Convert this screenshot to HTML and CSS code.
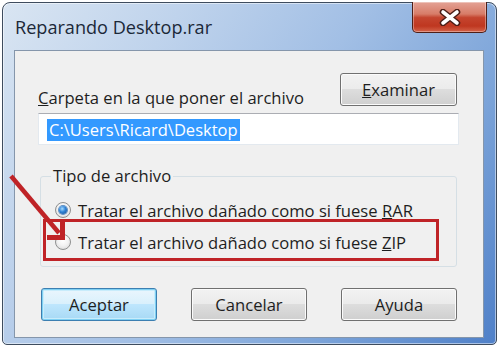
FILE: index.html
```html
<!DOCTYPE html>
<html lang="es">
<head>
  <meta charset="UTF-8" />
  <title>Reparando Desktop.rar</title>
  <link rel="stylesheet" href="styles.css">
</head>
<body>

  <div class="stage">
    <!-- Dialog window -->
    <div class="window">
      <div class="titlebar">
        <span class="title">Reparando Desktop.rar</span>
        <div class="close">
          <svg width="22" height="17" viewBox="0 0 22 17">
            <path d="M4 3 L18 14 M18 3 L4 14" stroke="#4b1d16" stroke-width="6.5" stroke-linecap="round" fill="none"/>
            <path d="M4 3 L18 14 M18 3 L4 14" stroke="#ffffff" stroke-width="3.6" stroke-linecap="round" fill="none"/>
          </svg>
        </div>
      </div>

      <div class="client">
        <div class="folder-row">
          <label class="folder-label"><u>C</u>arpeta en la que poner el archivo</label>
          <button class="btn btn-browse"><u>E</u>xaminar</button>
        </div>
        <div class="path-input"><span class="selected">C:\Users\Ricard\Desktop</span></div>

        <fieldset class="group">
          <legend>Tipo de archivo</legend>
          <div class="option"><span class="radio checked"></span>Tratar el archivo dañado como si fuese <u>R</u>AR</div>
          <div class="option"><span class="radio"></span>Tratar el archivo dañado como si fuese <u>Z</u>IP</div>
        </fieldset>

        <div class="actions">
          <button class="btn btn-default">Aceptar</button>
          <button class="btn">Cancelar</button>
          <button class="btn">Ayuda</button>
        </div>
      </div>
    </div>

    <!-- Red annotation over the dialog -->
    <svg class="annotation" width="500" height="347" viewBox="0 0 500 347">
      <rect x="44.5" y="220.5" width="393" height="39" fill="none" stroke="#bf2327" stroke-width="3"/>
      <path d="M11 176 L59 233" stroke="#bf2327" stroke-width="4.5" fill="none"/>
      <path d="M47 237.5 L62.5 237.5 L62.5 222" stroke="#bf2327" stroke-width="5" fill="none"/>
    </svg>
  </div>

</body>
</html>
```

FILE: styles.css
```css
* { box-sizing: border-box; }
body {
  margin: 0;
  background: #ffffff;
  font-family: 'Open Sans', 'Noto Sans', sans-serif;
  color: #1e1e1e;
}

.stage {
  position: relative;
  width: 500px;
  height: 347px;
  padding: 2px 0 0 2px;
}

/* Aero frame */
.window {
  width: 495px;
  height: 343px;
  border: 1px solid #3e4c5e;
  border-radius: 8px 8px 5px 5px;
  padding: 0 12px 6px 11px;
  background: linear-gradient(125deg, #d9e5f2 0%, #bfd3ec 25%, #a2bfe5 50%, #7ca4d9 75%, #4f80c8 100%);
  box-shadow: inset 0 0 0 1px rgba(255, 255, 255, 0.5);
}

.titlebar {
  display: flex;
  justify-content: space-between;
  align-items: flex-start;
  height: 47px;
}
.title {
  padding: 12px 0 0 1px;
  font-size: 18.1px;
  color: #1b2838;
}
.close {
  width: 75px;
  height: 31px;
  margin: -1px -3px 0 0;
  border: 1px solid #4f1f17;
  border-top: none;
  border-radius: 0 0 5px 5px;
  background: linear-gradient(#e4a295 0%, #d77c68 40%, #c4452f 52%, #bf3720 80%, #d3634a 100%);
  box-shadow: inset 0 0 0 1px rgba(255, 255, 255, 0.35);
  display: flex;
  justify-content: center;
  align-items: center;
}

.client {
  height: 288px;
  background: #f0f0f0;
  border: 1px solid #8596ab;
  padding: 0 26px 0 23px;
  font-size: 16.6px;
}

.folder-row {
  display: flex;
  justify-content: space-between;
  align-items: flex-end;
  padding-top: 22px;
}
.folder-label {
  margin-bottom: -3px;
  line-height: 22px;
}

.btn {
  height: 33px;
  width: 117px;
  border: 1px solid #707070;
  border-radius: 3px;
  background: linear-gradient(#f2f2f2 0%, #ebebeb 49%, #dddddd 50%, #cfcfcf 100%);
  box-shadow: inset 0 0 0 1px #fbfbfb;
  font-family: inherit;
  font-size: 16.6px;
  color: #1e1e1e;
  padding: 0;
}
.btn-default {
  border-color: #3c7fb1;
  background: linear-gradient(#eaf6fd 0%, #d9f0fc 49%, #bee6fd 50%, #a7d9f5 100%);
  box-shadow: inset 0 0 0 1px #7fd0f3, inset 0 0 0 2px #c8ecfb;
}

.path-input {
  height: 32px;
  margin: 7px -2px 0 0;
  padding: 4px 8px;
  background: #ffffff;
  border: 1px solid #e3e9ef;
  border-top-color: #abadb3;
}
.selected {
  display: inline-block;
  height: 22px;
  line-height: 22px;
  padding: 0 2px;
  background: #3399ff;
  color: #ffffff;
  font-size: 16.5px;
}

.group {
  margin: 20px 0 0 2px;
  padding: 7px 0 8px 14px;
  border: 1px solid #d5dfe5;
  border-radius: 3px;
}
.group legend {
  margin-left: -4px;
  padding: 0 2px;
  line-height: 22px;
}
.option {
  display: flex;
  align-items: center;
  height: 32px;
  white-space: pre;
}
.radio {
  width: 16px;
  height: 16px;
  margin-right: 7px;
  border-radius: 50%;
  border: 1px solid #8e8f8f;
  background: radial-gradient(circle at 50% 40%, #ffffff 0%, #f3f3f3 45%, #d4d4d4 100%);
  display: flex;
  justify-content: center;
  align-items: center;
}
.radio.checked::after {
  content: "";
  width: 8px;
  height: 8px;
  border-radius: 50%;
  background: radial-gradient(circle at 40% 35%, #a8dcff 0%, #2f83d6 45%, #1a4d8f 100%);
  box-shadow: 0 0 0 1px #5e8fc4;
}

.actions {
  display: flex;
  justify-content: space-between;
  margin: 21px 0 0 3px;
}
.actions .btn {
  width: 116px;
}

.annotation {
  position: absolute;
  top: 0;
  left: 0;
  pointer-events: none;
}
```
